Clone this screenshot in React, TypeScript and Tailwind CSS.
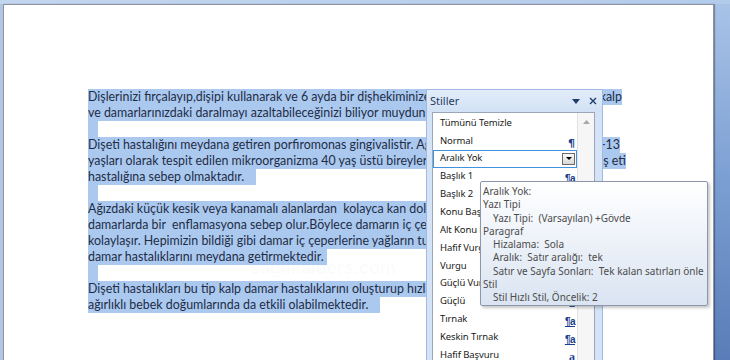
import React from 'react';

type DocLine = {
  text?: string;
  tail?: string;
  box?: string;
  empty?: boolean;
};

const docLines: DocLine[] = [
  {
    text: 'Dişlerinizi fırçalayıp,dişipi kullanarak ve 6 ayda bir dişhekiminize giderek hem dişetlerinizi hem de',
    tail: 'kalp',
    box: 'w-[534px]',
  },
  { text: 've damarlarınızdaki daralmayı azaltabileceğinizi biliyor muydunuz? ', box: 'pr-[4px]' },
  { empty: true },
  {
    text: 'Dişeti hastalığını meydana getiren porfiromonas gingivalistir. Ağız içinde yaşayan ve',
    tail: '12-13',
    box: 'w-[532px]',
  },
  {
    text: 'yaşları olarak tespit edilen mikroorganizma 40 yaş üstü bireylerin yarısında bulunmakta ve',
    tail: 'diş eti',
    box: 'w-[538px]',
  },
  { text: 'hastalığına sebep olmaktadır. ', box: 'pr-[9px]' },
  { empty: true },
  {
    text: 'Ağızdaki küçük kesik veya kanamalı alanlardan  kolayca kan dolaşımına karışan bu bakteriler',
    box: 'w-[534px]',
  },
  {
    text: 'damarlarda bir  enflamasyona sebep olur.Böylece damarın iç çeperlerinde plak oluşumu',
    box: 'w-[534px]',
  },
  {
    text: 'kolaylaşır. Hepimizin bildiği gibi damar iç çeperlerine yağların tutunması kalp ve',
    box: 'w-[534px]',
  },
  { text: 'damar hastalıklarını meydana getirmektedir.', box: 'pr-[3px]' },
  { empty: true },
  {
    text: 'Dişeti hastalıkları bu tip kalp damar hastalıklarını oluşturup hızlandırmanın yanı sıra düşük',
    box: 'w-[534px]',
  },
  { text: 'ağırlıklı bebek doğumlarında da etkili olabilmektedir. ', box: 'pr-[8px]' },
];

type StyleItem = { name: string; icon?: 'para' | 'link' | 'char'; selected?: boolean };

const styleItems: StyleItem[] = [
  { name: 'Tümünü Temizle' },
  { name: 'Normal', icon: 'para' },
  { name: 'Aralık Yok', icon: 'para', selected: true },
  { name: 'Başlık 1', icon: 'link' },
  { name: 'Başlık 2', icon: 'link' },
  { name: 'Konu Başlığı', icon: 'link' },
  { name: 'Alt Konu Başlığı', icon: 'link' },
  { name: 'Hafif Vurgu', icon: 'char' },
  { name: 'Vurgu', icon: 'char' },
  { name: 'Güçlü Vurgu', icon: 'char' },
  { name: 'Güçlü', icon: 'char' },
  { name: 'Tırnak', icon: 'link' },
  { name: 'Keskin Tırnak', icon: 'link' },
  { name: 'Hafif Başvuru', icon: 'char' },
  { name: 'Güçlü Başvuru', icon: 'char' },
];

const tipLines: { text: string; indent?: boolean }[] = [
  { text: 'Aralık Yok:' },
  { text: 'Yazı Tipi' },
  { text: 'Yazı Tipi:  (Varsayılan) +Gövde', indent: true },
  { text: 'Paragraf' },
  { text: 'Hizalama:  Sola', indent: true },
  { text: 'Aralık:  Satır aralığı:  tek', indent: true },
  { text: 'Satır ve Sayfa Sonları:  Tek kalan satırları önle', indent: true },
  { text: 'Stil' },
  { text: 'Stil Hızlı Stil, Öncelik: 2', indent: true },
];

const StyleIcon = ({ kind }: { kind?: StyleItem['icon'] }) => {
  if (kind === 'para')
    return <span className="font-['DejaVu_Sans',sans-serif] text-[11px] font-bold text-[#1c3c8c] leading-none">¶</span>;
  if (kind === 'link')
    return (
      <span className="font-['Liberation_Sans',sans-serif] text-[10px] font-bold text-[#1c3c8c] underline leading-none tracking-[-0.5px]">
        ¶a
      </span>
    );
  if (kind === 'char')
    return <span className="font-['Liberation_Serif',serif] text-[12px] font-bold text-[#1c3c8c] leading-none">a</span>;
  return null;
};

const StylesPanel = () => (
  <div className="absolute left-[422px] top-[84px] w-[177px] h-[290px] border border-[#9dbbe4] bg-[#d4e3f6] font-['Noto_Sans',sans-serif]">
    {/* header */}
    <div className="h-[22px] flex items-center pl-[3px] pr-[5px] bg-gradient-to-b from-[#e3edf9] to-[#d2e1f5]">
      <span className="text-[11px] text-[#1f3b63]">Stiller</span>
      <div className="ml-auto flex items-center gap-[9px]">
        <svg width="8" height="5" viewBox="0 0 8 5">
          <path d="M0 0h8L4 5z" fill="#1f3c6e" />
        </svg>
        <svg width="8" height="8" viewBox="0 0 8 8">
          <path d="M1 1l6 6M7 1L1 7" stroke="#1f3c6e" strokeWidth="1.4" />
        </svg>
      </div>
    </div>
    {/* list */}
    <div className="ml-[5px] mr-[7px] h-[260px] flex border border-[#9aa7b9] bg-white">
      <div className="flex-1 pt-[1px]">
        {styleItems.map((s) =>
          s.selected ? (
            <div key={s.name} className="h-[17.85px] flex items-center pl-[6px] pr-[1px] border border-[#3f93df]">
              <span className="text-[9.5px] text-[#1a1a1a] tracking-[-0.1px]">{s.name}</span>
              <span className="ml-auto w-[13px] h-[12px] border border-[#6a6a6a] bg-gradient-to-b from-[#fbfbfb] to-[#d6d6d6] flex items-center justify-center">
                <svg width="6" height="3" viewBox="0 0 6 3">
                  <path d="M0 0h6L3 3z" fill="#000" />
                </svg>
              </span>
            </div>
          ) : (
            <div key={s.name} className="h-[17.85px] flex items-center pl-[7px] pr-[2px]">
              <span className="text-[9.5px] text-[#1a1a1a] tracking-[-0.1px]">{s.name}</span>
              <span className="ml-auto">
                <StyleIcon kind={s.icon} />
              </span>
            </div>
          )
        )}
      </div>
      <div className="w-[17px] border-l border-[#e2e2e2] bg-[#f6f6f6] flex justify-center pt-[7px]">
        <svg width="7" height="4" viewBox="0 0 7 4">
          <path d="M0 4h7L3.5 0z" fill="#a8a8a8" />
        </svg>
      </div>
    </div>
  </div>
);

const Tooltip = () => (
  <div className="absolute left-[476px] top-[176px] w-[228px] h-[125px] rounded-[2px] border border-[#8c98a9] bg-gradient-to-b from-white to-[#dae4f2] shadow-[2px_2px_3px_rgba(0,0,0,0.22)] pl-[2px] pt-[3px] font-['Noto_Sans',sans-serif] text-[10px] leading-[13.3px] text-[#4c4c4c]">
    {tipLines.map((l, i) => (
      <div key={i} className={l.indent ? 'pl-[10px] whitespace-pre' : 'whitespace-pre'}>
        {l.text}
      </div>
    ))}
  </div>
);

export default function App() {
  return (
    <div className="w-[730px] h-[360px] overflow-hidden flex flex-col bg-[#b9cde8]">
      <div className="h-[4px] bg-gradient-to-r from-[#c3d6ef] to-[#b3cbeb]" />
      <div className="flex flex-1 min-h-0">
        <div className="w-[3px] bg-[#b1c6e3]" />
        <div className="relative flex-1 bg-white border-l border-t border-r border-[#8d949d] overflow-hidden shadow-[1px_0_1px_rgba(0,0,0,0.3)]">
          {/* document body */}
          <div className="pl-[84px] pt-[84px] font-['Lato',sans-serif] text-[12.4px] leading-[16px] text-[#1e2c46]">
            {docLines.map((l, i) =>
              l.empty ? (
                <div key={i} className="h-[16px]">
                  <div className="w-[10px] h-[16px] bg-[#abc9ef]" />
                </div>
              ) : (
                <div key={i} className="flex h-[16px]">
                  <div className={`flex bg-[#abc9ef] ${l.box}`}>
                    <span className="flex-1 min-w-0 overflow-hidden whitespace-pre">{l.text}</span>
                    {l.tail && <span className="shrink-0 whitespace-pre pl-[3px]">{l.tail}</span>}
                  </div>
                </div>
              )
            )}
          </div>
          {/* faint watermark */}
          <div className="absolute left-[246px] top-[250px] font-['Liberation_Sans',sans-serif] text-[18px] font-bold text-[rgba(120,135,150,0.035)] whitespace-nowrap">
            saglikalders.com
          </div>
          <StylesPanel />
          <Tooltip />
        </div>
        <div className="w-[16px] bg-gradient-to-b from-[#a9c3e7] via-[#7b9ed2] to-[#5a7cb8]" />
      </div>
    </div>
  );
}
